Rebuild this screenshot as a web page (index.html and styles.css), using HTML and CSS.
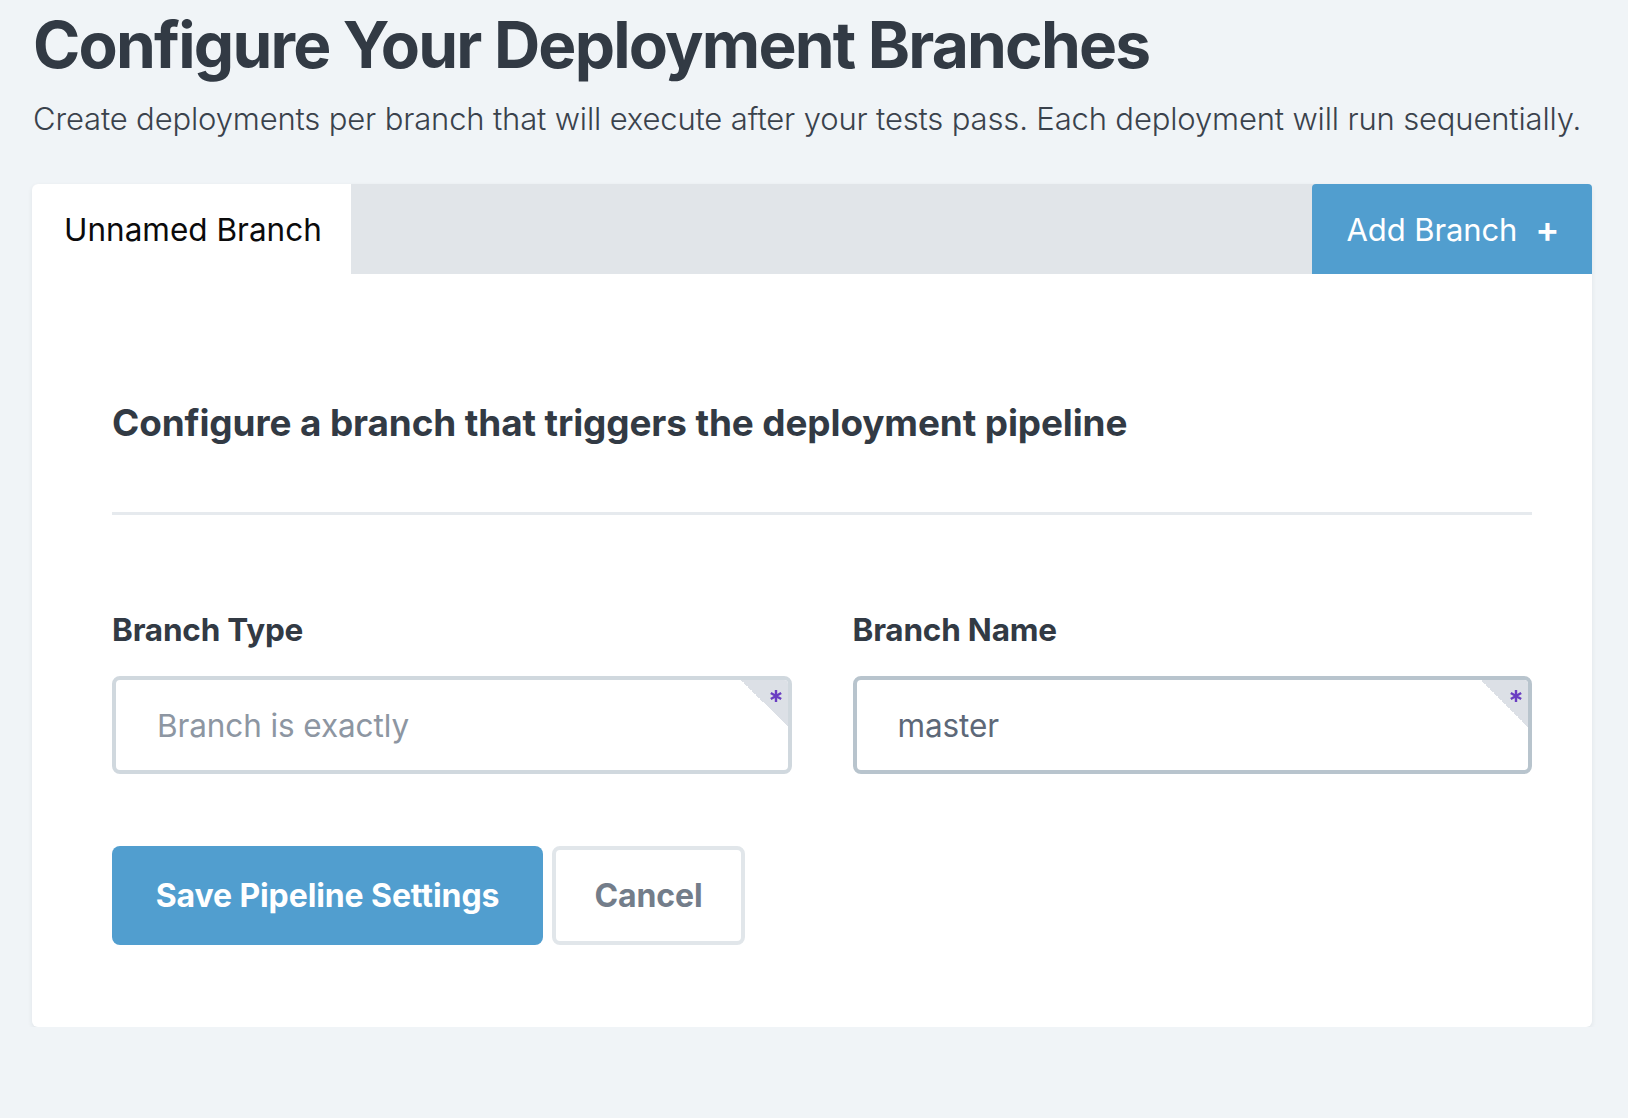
FILE: index.html
```html
<!DOCTYPE html>
<html lang="en">
<head>
<meta charset="utf-8">
<title>Configure Your Deployment Branches</title>
<link rel="stylesheet" href="styles.css">
</head>
<body>
<main class="page">
  <header class="page-header">
    <h1 class="page-title">Configure Your Deployment Branches</h1>
    <p class="page-subtitle">Create deployments per branch that will execute after your tests pass. Each deployment will run sequentially.</p>
  </header>

  <section class="card">
    <div class="tabs">
      <div class="tab tab-active">Unnamed Branch</div>
      <div class="tabs-fill"></div>
      <button class="add-branch" type="button">Add Branch <span class="plus">+</span></button>
    </div>

    <div class="card-body">
      <h2 class="section-title">Configure a branch that triggers the deployment pipeline</h2>
      <hr class="divider">

      <div class="fields">
        <div class="field">
          <label class="field-label">Branch Type</label>
          <div class="input input-empty">
            <span class="input-text placeholder">Branch is exactly</span>
            <span class="required">
              <svg class="star" viewBox="0 0 14 14" width="14" height="14" aria-hidden="true">
                <path d="M7 1V13M1.8 4L12.2 10M1.8 10L12.2 4" stroke="#6a3ec2" stroke-width="2.4" fill="none"/>
              </svg>
            </span>
          </div>
        </div>
        <div class="field">
          <label class="field-label">Branch Name</label>
          <div class="input input-filled">
            <span class="input-text value">master</span>
            <span class="required">
              <svg class="star" viewBox="0 0 14 14" width="14" height="14" aria-hidden="true">
                <path d="M7 1V13M1.8 4L12.2 10M1.8 10L12.2 4" stroke="#6a3ec2" stroke-width="2.4" fill="none"/>
              </svg>
            </span>
          </div>
        </div>
      </div>

      <div class="actions">
        <button class="btn btn-primary" type="button">Save Pipeline Settings</button>
        <button class="btn btn-secondary" type="button">Cancel</button>
      </div>
    </div>
  </section>
</main>
</body>
</html>
```

FILE: styles.css
```css
* { box-sizing: border-box; }

html, body {
  margin: 0;
  padding: 0;
  background: #f0f4f7;
  font-family: Inter, "Noto Sans", "Liberation Sans", sans-serif;
  color: #323a44;
}

.page {
  padding: 0 36px 0 32px;
}

.page-header {
  padding-top: 6px;
}

.page-title {
  margin: 0 0 0 1px;
  font-size: 64px;
  line-height: 78px;
  font-weight: 700;
  letter-spacing: -1.8px;
  color: #323a44;
}

.page-subtitle {
  margin: 15px 0 0 1px;
  font-size: 31px;
  line-height: 40px;
  font-weight: 300;
  color: #3a424c;
  letter-spacing: -0.15px;
}

.card {
  margin-top: 45px;
  background: #fff;
  border-radius: 6px;
  box-shadow: 0 2px 5px rgba(40, 50, 60, 0.08);
}

.tabs {
  display: flex;
  height: 90px;
  background: #e1e5e9;
  border-radius: 6px 6px 0 0;
}

.tab {
  display: flex;
  align-items: center;
  padding: 0 0 0 32px;
  font-size: 31.5px;
  color: #0b0b0c;
}

.tab-active {
  background: #fff;
  border-radius: 6px 0 0 0;
  width: 319px;
}

.tabs-fill { flex: 1; }

.add-branch {
  width: 280px;
  border: 0;
  margin: 0;
  background: #519ecf;
  color: #fff;
  font-family: inherit;
  font-size: 31px;
  letter-spacing: -0.1px;
  border-radius: 4px 4px 0 0;
  display: flex;
  align-items: center;
  justify-content: center;
  gap: 18px;
  padding: 0 0 0 2px;
}

.plus {
  font-size: 36px;
  font-weight: 600;
  line-height: 1;
}

.card-body {
  padding: 127px 60px 82px 80px;
}

.section-title {
  margin: 0;
  font-size: 36.9px;
  line-height: 44px;
  font-weight: 700;
  letter-spacing: -0.1px;
  color: #323a44;
}

.divider {
  margin: 67px 0 0 0;
  border: 0;
  height: 3px;
  background: #e6eaee;
}

.fields {
  display: grid;
  grid-template-columns: 1fr 1fr;
  column-gap: 61px;
  margin-top: 95px;
}

.field {
  display: flex;
  flex-direction: column;
}

.field-label {
  font-size: 31.5px;
  line-height: 40px;
  font-weight: 700;
  letter-spacing: -0.2px;
  color: #323a44;
}

.input {
  position: relative;
  margin-top: 26px;
  height: 98px;
  border: 4px solid #d0d8de;
  border-radius: 8px;
  background: #fff;
  display: flex;
  align-items: center;
  padding-left: 41px;
  overflow: hidden;
}

.input-filled {
  border-color: #b8c4cd;
}

.input-text {
  font-size: 31.5px;
  letter-spacing: -0.1px;
}

.placeholder { color: #8d96a2; }
.value { color: #5d6878; }

.required {
  position: absolute;
  top: 0;
  right: 0;
  width: 47px;
  height: 47px;
  background: linear-gradient(to bottom left, #dce0e6 50%, transparent 50%);
}

.star {
  position: absolute;
  top: 9px;
  right: 5px;
  display: block;
}

.actions {
  display: flex;
  gap: 9px;
  margin-top: 72px;
}

.btn {
  height: 99px;
  font-family: inherit;
  font-size: 32px;
  font-weight: 700;
  letter-spacing: -0.1px;
  border-radius: 8px;
  cursor: pointer;
}

.btn-primary {
  width: 431px;
  background: #519ecf;
  color: #fff;
  border: 0;
}

.btn-secondary {
  width: 193px;
  background: #fff;
  color: #737d8a;
  border: 4px solid #e1e6ea;
}
```
